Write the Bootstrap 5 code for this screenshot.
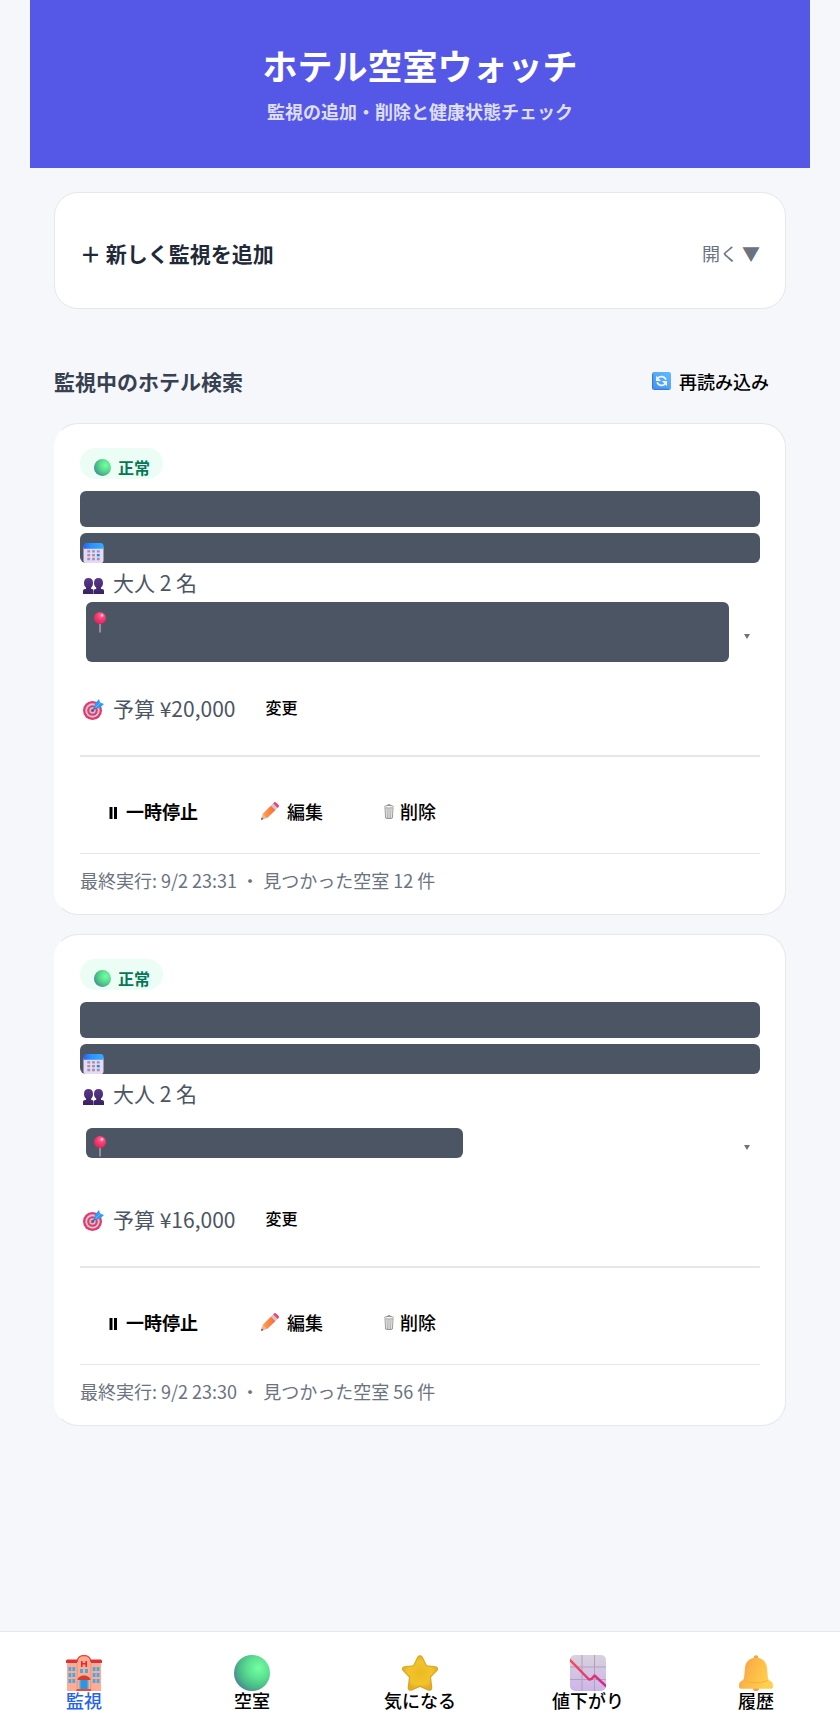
<!DOCTYPE html>
<html lang="ja">
<head>
<meta charset="utf-8">
<meta name="viewport" content="width=device-width, initial-scale=1">
<title>ホテル空室ウォッチ</title>
<link href="https://cdn.jsdelivr.net/npm/bootstrap@5.3.0/dist/css/bootstrap.min.css" rel="stylesheet">
<style>
  body { background: #f5f7fb; color: #4b5563; font-family: "Noto Sans CJK JP", sans-serif; font-size: 18px; line-height: 26px; }
  button { font-family: inherit; border: 0; background: none; color: #000; }
  .page-shell { padding: 0 30px 204px; }
  .hero { background: #5558e6; padding: 41px 24px 43px; }
  .hero h1 { font-size: 35px; line-height: 48px; font-weight: 700; margin-bottom: 9px; }
  .hero p { line-height: 27px; font-weight: 700; color: #dddefa; }
  .content-area { padding: 24px; }
  .panel { border: 1px solid #e5e7eb; border-radius: 24px; background: #fff; }
  .add-toggle { padding: 46px 25px 41px; line-height: 28px; }
  .add-title { font-size: 21px; font-weight: 700; color: #1f2937; }
  .muted { color: #6b7280; }
  .list-head { padding: 57px 0 27px; line-height: 30px; }
  .list-head h2 { font-size: 21px; line-height: 30px; font-weight: 700; color: #374151; }
  .reload { font-size: 18px; font-weight: 500; padding: 0 17px; }
  .watch-card { border-left-color: #fff; padding: 24px 25px 21px; }
  .watch-card + .watch-card { margin-top: 19px; }
  .status-pill { background: #ecfdf5; color: #047857; border-radius: 16px; font-size: 16px; font-weight: 700; line-height: 22px; padding: 8px 13px 1px 14px; gap: 7px; margin-bottom: 12px; }
  .masked { background: #4b5563; border-radius: 6px; }
  .masked-title { height: 36px; margin-bottom: 6px; }
  .masked-line { height: 30px; }
  .masked-date { padding: 10px 3px 0; }
  .detail { font-size: 21px; gap: 9px; padding-left: 3px; }
  .guests svg { margin-top: 6px; }
  .guests { line-height: 39px; }
  .place { width: 100%; min-height: 60px; padding: 0 10px 0 6px; }
  .place .masked { width: 643px; max-width: 97%; padding: 10px 5px 0; }
  .place .place-short { width: 377px; padding-top: 8px; }
  .place .masked-tall { height: 60px; }
  .budget { line-height: 93px; }
  .budget svg { margin-top: 2px; }
  .change { font-size: 16px; font-weight: 500; line-height: 30px; padding: 0 21px 4px; }
  .actions { border-top: 2px solid #e5e7eb; padding: 34px 0 22px; gap: 7px; }
  .actions button { font-weight: 500; padding: 6px 28px; line-height: 28px; gap: 8px; }
  .actions .remove { padding-left: 26px; gap: 6px; }
  .last-run { border-top: 1px solid #e5e7eb; padding-top: 13px; }
  .tab-bar { background: #fff; border-top: 1px solid #e5e7eb; padding: 23px 0 16px; }
  .tab-bar a { flex: 1 1 0; color: #000; font-weight: 500; line-height: 18px; text-decoration: none; }
  .tab-bar a.active { color: #2563eb; }
  .tab-bar svg { width: 36px; height: 36px; }
  svg { flex: none; display: block; }
</style>
</head>
<body>
<svg width="0" height="0" class="position-absolute" aria-hidden="true">
  <defs>
    <radialGradient id="greenFill" cx=".68" cy=".36" r=".7"><stop offset="0" stop-color="#73ffa2"/><stop offset=".45" stop-color="#5bdf91"/><stop offset=".8" stop-color="#48b886"/><stop offset="1" stop-color="#4b8c99"/></radialGradient>
    <linearGradient id="calTop"><stop offset="0" stop-color="#2c5ff0"/><stop offset=".4" stop-color="#2795ff"/><stop offset="1" stop-color="#38aaff"/></linearGradient>
    <linearGradient id="bellFill" x1="0" y1="0" x2="1" y2=".4"><stop offset="0" stop-color="#f29a52"/><stop offset=".5" stop-color="#fdb945"/><stop offset="1" stop-color="#ffd050"/></linearGradient>
    <linearGradient id="chartFill" x1="0" y1="0" x2="0" y2="1"><stop offset="0" stop-color="#d8d1de"/><stop offset="1" stop-color="#cdb5ea"/></linearGradient>
    <linearGradient id="lineFill"><stop offset="0" stop-color="#fb4b52"/><stop offset="1" stop-color="#d02290"/></linearGradient>
    <linearGradient id="syncFill" x1="1" y1="0" x2=".2" y2="1"><stop offset="0" stop-color="#62bcff"/><stop offset="1" stop-color="#4794ee"/></linearGradient>
    <linearGradient id="pencilFill"><stop offset="0" stop-color="#ffa34a"/><stop offset="1" stop-color="#fc6635"/></linearGradient>
    <radialGradient id="starFill"><stop offset="0" stop-color="#eaba22"/><stop offset=".7" stop-color="#f2c42b"/><stop offset="1" stop-color="#e6ac27"/></radialGradient>
    <linearGradient id="peopleFill" x1="0" y1="0" x2="0" y2="1"><stop offset="0" stop-color="#59398c"/><stop offset="1" stop-color="#3a2161"/></linearGradient>
    <radialGradient id="pinFill" cx=".6" cy=".3" r=".7"><stop offset="0" stop-color="#ff6b98"/><stop offset=".5" stop-color="#fb3970"/><stop offset="1" stop-color="#dc2560"/></radialGradient>
  </defs>
  <symbol id="i-green" viewBox="0 0 36 36"><circle cx="18" cy="18" r="18" fill="url(#greenFill)"/></symbol>
  <symbol id="i-cal" viewBox="0 0 21 21"><path d="M0 4h21v14a3 3 0 0 1-3 3H3a3 3 0 0 1-3-3z" fill="#e6d9f3"/><path d="M0 6V3a3 3 0 0 1 3-3h15a3 3 0 0 1 3 3v3z" fill="url(#calTop)"/><g fill="#a091ae"><path d="M4 7.500h3v2.500H4zM9 7.500h3v2.500H9zM14 7.500h3v2.500h-3zM4 11.500h3V14H4zM9 11.500h3V14H9zM4 15.500h3V18H4zM9 15.500h3V18H9zM14 15.500h3V18h-3z"/></g><path d="M14 11.500h3V14h-3z" fill="#1689f2"/></symbol>
  <symbol id="i-people" viewBox="0 0 21 16"><g fill="url(#peopleFill)"><path d="M5.500 0C8.500 0 10 1.500 10 5c0 2-.7 3.600-1.800 4.600v1.400h1c.9.100 1.300.9 1.300 2v3H0v-3c0-1.300.8-2 2-2h1V9.600C1.800 8.700 1 7 1 5c0-3.500 1.600-5 4.500-5z"/><path d="M15.500 0C18.400 0 20 1.500 20 5c0 2-.8 3.700-2 4.600V11h1c1.300 0 2 .8 2 2v3H10.800v-3c0-1.200.6-2 1.700-2h.7V9.600C11.900 8.700 11 7 11 5c0-3.500 1.600-5 4.500-5z"/></g></symbol>
  <symbol id="i-pin" viewBox="0 0 18 21"><path d="M8.200 11h1.700v9l-.9 1-.8-1z" fill="#a795aa"/><circle cx="9" cy="6" r="6" fill="url(#pinFill)"/><circle cx="11" cy="3.500" r="1.400" fill="#ffbdd0"/></symbol>
  <symbol id="i-target" viewBox="0 0 21 21"><circle cx="9.500" cy="11.500" r="9.500" fill="#e6386c"/><circle cx="9.500" cy="11.500" r="7.200" fill="#d8c3d3"/><circle cx="9.500" cy="11.500" r="5.300" fill="#d7406e"/><circle cx="9.500" cy="11.500" r="3.200" fill="#cfbdcd"/><circle cx="9.500" cy="11.500" r="1.600" fill="#b1416e"/><path d="M9.500 11.500 15 6" stroke="#275fbe" stroke-width="1.300"/><path d="m11.500 9 .2-4L16 0l1 3.500L21 5l-4.500 4.300z" fill="#2d9bf7"/><path d="m12.500 8.500 5.500-5.500" stroke="#8dd0ff" stroke-width=".7"/></symbol>
  <symbol id="i-pause" viewBox="0 0 9 12"><path d="M1 0h3v12H1zM5.500 0h3v12h-3z"/></symbol>
  <symbol id="i-pencil" viewBox="0 0 18 18"><path d="m0 18 1.600-6L5.900 16z" fill="#e9b6a2"/><path d="m0 18 .8-2.500 1.600 1.600z" fill="#603850"/><path d="M1.600 12 10 3.400 14.500 8 5.900 16.300z" fill="url(#pencilFill)"/><path d="m10 3.400 2.100-2 4.400 4.500-2 2.100z" fill="#ccc1df"/><path d="m12.100 1.400 1-1c.8-.7 1.500-.3 2.200.4l2 2c.8.8 1 1.500.3 2.200l-1 .9z" fill="#f5435f"/></symbol>
  <symbol id="i-trash" viewBox="0 0 10 15"><g fill="none" stroke="#555" stroke-width=".6"><ellipse cx="5" cy="2.800" rx="4.600" ry="1.300"/><path d="M3.300 1.600C3.300.1 6.700.1 6.700 1.600M1 4l.6 10c1.500.8 5.300.8 6.800 0L9 4M3 4.600l.3 9.700M5 4.600v9.900M7 4.600l-.3 9.700"/></g></symbol>
  <symbol id="i-sync" viewBox="0 0 19 18"><rect width="19" height="18" rx="2" fill="url(#syncFill)"/><path d="M.6 2v14.500M2 17.400h15" stroke="#347ed9" stroke-width="1.200"/><g fill="none" stroke="#eef4ff" stroke-width="1.800"><path d="M5.500 6.400C8 3.600 12.800 4.100 13.900 7.800"/><path d="M13.400 11.500C11 14.500 6.500 13.900 5.200 10.200"/></g><path d="M4 3.800V9h5.200zM15 14.200V9H9.800z" fill="#eef4ff"/></symbol>
  <symbol id="i-hotel" viewBox="0 0 36 36"><path d="M1 7h34v29H1z" fill="#ffac92"/><path d="M0 8V6c0-1 .8-1.600 1.800-1.600h32.400c1 0 1.800.6 1.800 1.600v2z" fill="#df3036"/><path d="M11 36V7c0-4 2.700-7 7-7s7 3 7 7v29z" fill="#ffad91"/><path d="M11.200 7c0-4 2.700-6.500 6.800-6.500S24.800 3 24.800 7" fill="none" stroke="#e94040" stroke-width="1.300"/><path d="M11.200 8v28M24.800 8v28" stroke="#dc8983" stroke-width=".7"/><path d="M15 6h1.600v2.100h2.800V6H21v6h-1.600V9.600h-2.800V12H15z" fill="#e82637"/><g fill="#42a9eb"><path d="M2.500 12h2.800v4H2.500zM6.400 12h2.800v4H6.400zM2.500 18h2.800v4H2.500zM6.400 18h2.800v4H6.400zM2.500 24h2.800v4H2.500zM6.400 24h2.800v4H6.400zM26.700 12h2.800v4h-2.800zM30.600 12h2.800v4h-2.800zM26.700 18h2.800v4h-2.800zM30.600 18h2.800v4h-2.800zM26.700 24h2.800v4h-2.800zM30.600 24h2.800v4h-2.800zM14 14h3v4h-3zM19 14h3v4h-3z"/><path d="M13.500 24h9v10h-9z"/></g><path d="M16 24v10M18 24v10M20 24v10" stroke="#1975bb" stroke-width=".8"/><path d="M11.500 25c.8-6 12.200-6 13 0z" fill="#d63d31"/><path d="M11 34h14v2H10z" fill="#e84a3b"/></symbol>
  <symbol id="i-star" viewBox="0 0 36 36"><path d="M15.200 2c1.200-2.500 4.400-2.500 5.600 0l4 8.300 8.700 1c2.600.4 3.400 3 1.600 4.800l-6 6.200 1.200 9.900c.3 3-2 4.400-4.400 3.200L18 32l-7.900 3.400C7.700 36.600 5.400 35.200 5.700 32.200l1.200-9.900L.9 16c-1.800-1.800-1-4.400 1.600-4.800l8.700-.9z" fill="#d9a526"/><path d="M16.200 2.300c.8-1.600 2.800-1.600 3.600 0l4.200 8.900 9.400 1c1.800.3 2.200 1.900 1 3.100l-6.600 6.500 1.200 10c.2 2.100-1.400 3-3.200 2.100L18 30.400l-7.800 3.500c-1.800.9-3.400 0-3.200-2.100l1.200-10-6.600-6.500c-1.200-1.200-.8-2.800 1-3.100l9.400-1z" fill="url(#starFill)"/></symbol>
  <symbol id="i-chart" viewBox="0 0 36 36"><clipPath id="chartEdge"><rect width="36" height="36" rx="5"/></clipPath><g clip-path="url(#chartEdge)"><rect width="36" height="36" fill="url(#chartFill)"/><path d="M12 0v36M24.500 0v36M0 12h36M0 24.500h36" stroke="#aea3b7" stroke-width="1"/><path d="m-1 4 20 20.500 2.500-.5 3-3.500L38 33" fill="none" stroke="url(#lineFill)" stroke-width="2.500" stroke-linejoin="round"/></g></symbol>
  <symbol id="i-bell" viewBox="0 0 36 36"><circle cx="18" cy="33" r="3.200" fill="#ef9b58"/><circle cx="18" cy="2.500" r="2.300" fill="#f4a43c"/><path d="M18 2.800c7 0 10.500 4.400 11 10l.9 9.500c.2 2.300 1.200 3 3 4 2 1.200 2.300 3.500 2 6 0 .9-.6 1.400-1.500 1.400H2.600c-.9 0-1.500-.5-1.500-1.400-.3-2.500 0-4.800 2-6 1.800-1 2.800-1.700 3-4L7 12.800c.5-5.600 4-10 11-10z" fill="url(#bellFill)"/><path d="M6 25.500c8 3 16 3 24 0" fill="none" stroke="#f4b03b" stroke-width="1"/></symbol>
</svg>

<div class="page-shell">
  <header class="hero text-center text-white">
    <h1>ホテル空室ウォッチ</h1>
    <p class="mb-0">監視の追加・削除と健康状態チェック</p>
  </header>
  <main class="content-area">
    <section class="panel">
      <button type="button" class="add-toggle w-100 d-flex justify-content-between align-items-center" aria-expanded="false">
        <span class="add-title">＋ 新しく監視を追加</span>
        <span class="muted">開く ▼</span>
      </button>
    </section>

    <div class="list-head d-flex justify-content-between align-items-center">
      <h2 class="mb-0">監視中のホテル検索</h2>
      <button type="button" class="reload d-flex align-items-center gap-2"><svg width="19" height="18"><use href="#i-sync"/></svg>再読み込み</button>
    </div>

    <article class="panel watch-card">
      <div class="d-flex"><span class="status-pill d-flex align-items-center"><svg width="17" height="17"><use href="#i-green"/></svg>正常</span></div>
      <div class="masked masked-title"></div>
      <div class="masked masked-line masked-date"><svg width="21" height="20"><use href="#i-cal"/></svg></div>
      <div class="detail guests d-flex align-items-center"><svg width="21" height="16"><use href="#i-people"/></svg>大人 2 名</div>
      <button type="button" class="place d-flex justify-content-between align-items-center" aria-label="場所を表示">
        <span class="masked masked-tall d-block"><svg width="18" height="21"><use href="#i-pin"/></svg></span>
        <svg class="mt-2" width="6" height="5"><path d="M0 0h6L3 5z" fill="#6b7280"/></svg>
      </button>
      <div class="detail budget d-flex align-items-center"><svg width="21" height="21"><use href="#i-target"/></svg>予算 ¥20,000<button type="button" class="change">変更</button></div>
      <div class="actions d-flex">
        <button type="button" class="d-flex align-items-center fw-bold"><svg class="mt-1" width="10" height="12"><use href="#i-pause"/></svg>一時停止</button>
        <button type="button" class="d-flex align-items-center"><svg width="18" height="18"><use href="#i-pencil"/></svg>編集</button>
        <button type="button" class="remove d-flex align-items-center"><svg width="10" height="15"><use href="#i-trash"/></svg>削除</button>
      </div>
      <div class="last-run muted">最終実行: 9/2 23:31 ・ 見つかった空室 12 件</div>
    </article>

    <article class="panel watch-card">
      <div class="d-flex"><span class="status-pill d-flex align-items-center"><svg width="17" height="17"><use href="#i-green"/></svg>正常</span></div>
      <div class="masked masked-title"></div>
      <div class="masked masked-line masked-date"><svg width="21" height="20"><use href="#i-cal"/></svg></div>
      <div class="detail guests d-flex align-items-center"><svg width="21" height="16"><use href="#i-people"/></svg>大人 2 名</div>
      <button type="button" class="place d-flex justify-content-between align-items-center" aria-label="場所を表示">
        <span class="masked masked-line place-short d-block"><svg width="18" height="21"><use href="#i-pin"/></svg></span>
        <svg class="mt-2" width="6" height="5"><path d="M0 0h6L3 5z" fill="#6b7280"/></svg>
      </button>
      <div class="detail budget d-flex align-items-center"><svg width="21" height="21"><use href="#i-target"/></svg>予算 ¥16,000<button type="button" class="change">変更</button></div>
      <div class="actions d-flex">
        <button type="button" class="d-flex align-items-center fw-bold"><svg class="mt-1" width="10" height="12"><use href="#i-pause"/></svg>一時停止</button>
        <button type="button" class="d-flex align-items-center"><svg width="18" height="18"><use href="#i-pencil"/></svg>編集</button>
        <button type="button" class="remove d-flex align-items-center"><svg width="10" height="15"><use href="#i-trash"/></svg>削除</button>
      </div>
      <div class="last-run muted">最終実行: 9/2 23:30 ・ 見つかった空室 56 件</div>
    </article>
  </main>
</div>

<nav class="tab-bar fixed-bottom d-flex" aria-label="メイン">
  <a href="#watch" class="active d-flex flex-column align-items-center"><svg><use href="#i-hotel"/></svg>監視</a>
  <a href="#rooms" class="d-flex flex-column align-items-center"><svg><use href="#i-green"/></svg>空室</a>
  <a href="#favorites" class="d-flex flex-column align-items-center"><svg><use href="#i-star"/></svg>気になる</a>
  <a href="#drops" class="d-flex flex-column align-items-center"><svg><use href="#i-chart"/></svg>値下がり</a>
  <a href="#history" class="d-flex flex-column align-items-center"><svg><use href="#i-bell"/></svg>履歴</a>
</nav>
<script src="https://cdn.jsdelivr.net/npm/bootstrap@5.3.0/dist/js/bootstrap.bundle.min.js"></script>
</body>
</html>
